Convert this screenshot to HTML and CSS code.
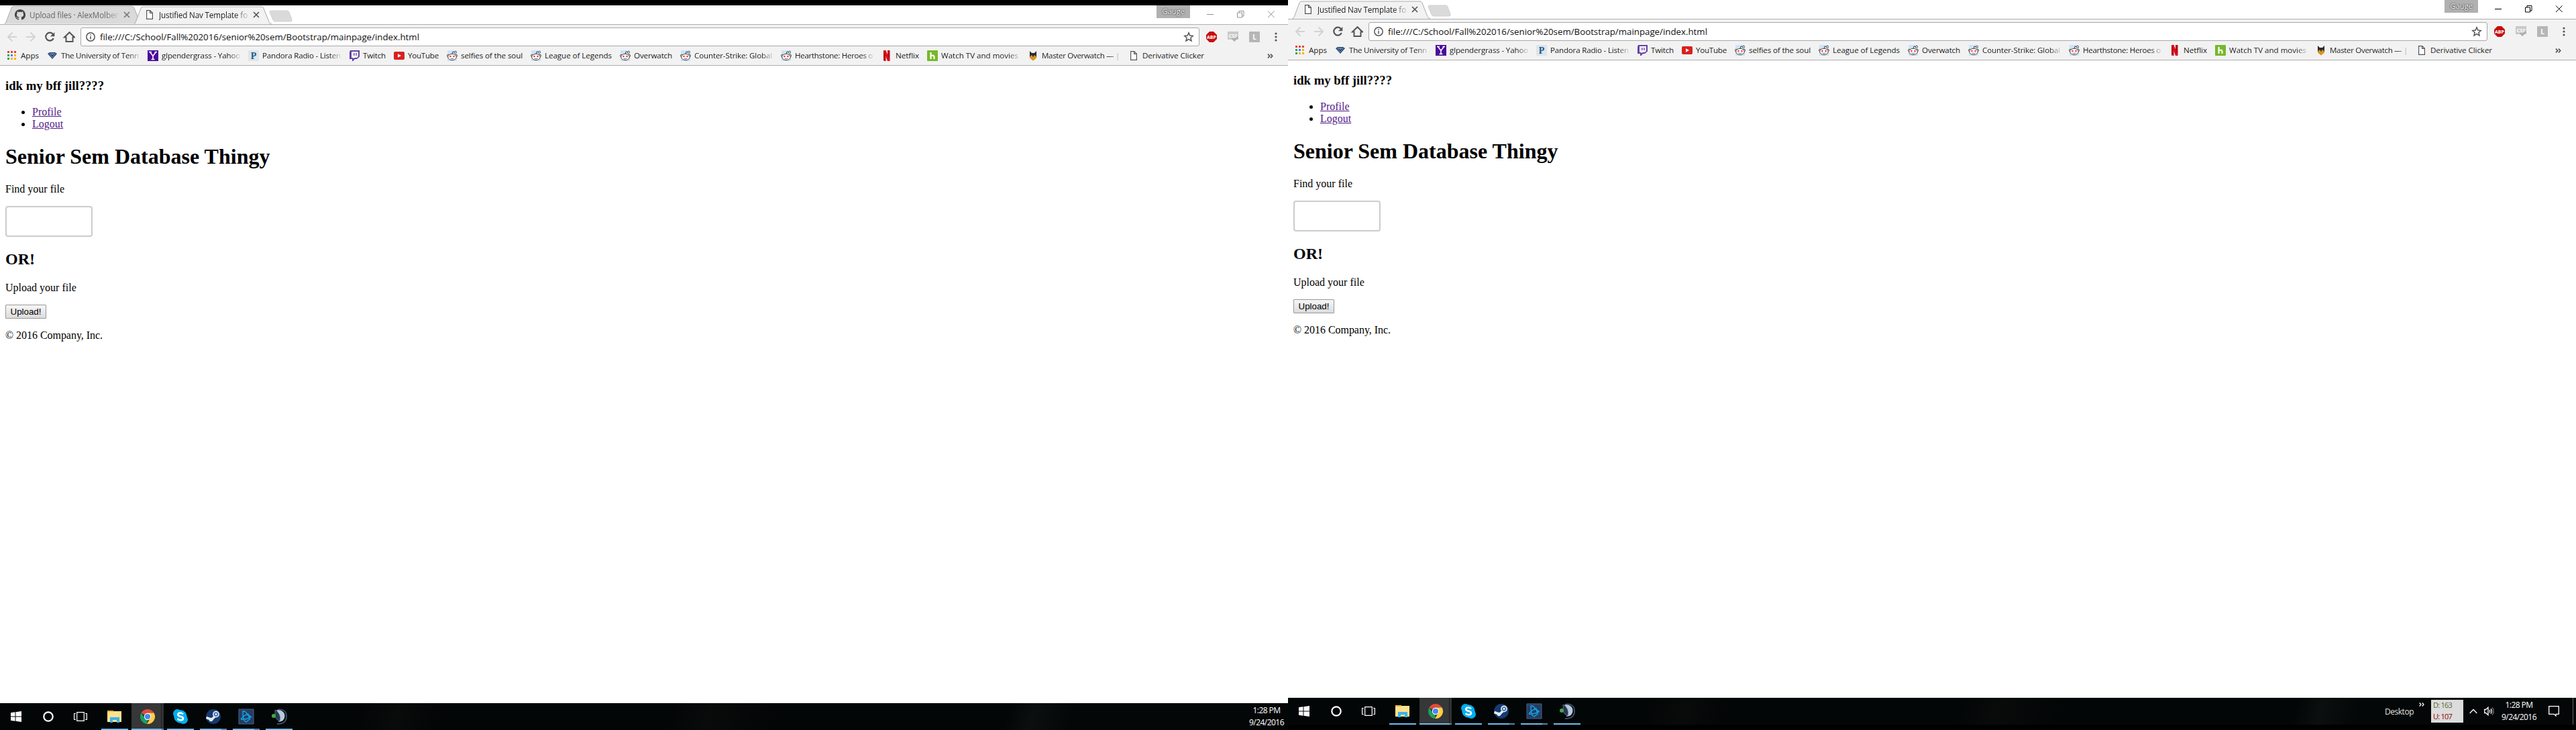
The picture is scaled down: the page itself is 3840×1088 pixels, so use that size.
FILE: index.html
```
<!DOCTYPE html>
<html lang="en">
<head>
<meta charset="utf-8">
<title>Justified Nav Template</title>
<link rel="stylesheet" href="styles.css">
</head>
<body>
<svg class="defs" aria-hidden="true">
  <symbol id="i-page" viewBox="0 0 16 16"><path d="M3.600 1.600h5.200l3.600 3.600v9.200H3.600zM8.600 1.800v3.600h3.600" fill="#fff" stroke="#555" stroke-width="1.200"/></symbol>
  <symbol id="i-close" viewBox="0 0 10 10"><path d="M1 1l8 8M9 1l-8 8" fill="none" stroke="#555" stroke-width="1.700"/></symbol>
  <symbol id="i-github" viewBox="0 0 16 16"><path fill="#444" d="M8 0C3.580 0 0 3.580 0 8c0 3.540 2.290 6.530 5.470 7.590.4.070.55-.17.55-.38 0-.19-.01-.82-.01-1.490-2.010.37-2.530-.49-2.690-.94-.09-.23-.48-.94-.82-1.130-.28-.15-.68-.52-.01-.53.63-.01 1.080.58 1.230.82.72 1.210 1.870.87 2.330.66.07-.52.28-.87.51-1.070-1.780-.2-3.640-.89-3.640-3.950 0-.87.31-1.590.82-2.150-.08-.2-.36-1.020.08-2.120 0 0 .67-.21 2.200.82.64-.18 1.320-.27 2-.27s1.360.09 2 .27c1.530-1.040 2.200-.82 2.200-.82.44 1.100.16 1.920.08 2.120.51.56.82 1.270.82 2.150 0 3.070-1.870 3.750-3.650 3.950.29.25.54.73.54 1.480 0 1.070-.01 1.930-.01 2.200 0 .21.15.46.55.38A8.010 8.010 0 0 0 16 8c0-4.420-3.580-8-8-8z"/></symbol>
  <symbol id="i-reddit" viewBox="0 0 16 16"><path d="M1 0h14v16H1z" fill="#cee3f8"/><path d="M8 6L9 2l3 .8" fill="none" stroke="#444"/><circle cx="13" cy="2.800" r="1.500" fill="#fff" stroke="#444" stroke-width=".9"/><circle cx="2.200" cy="8" r="1.700" fill="#fff" stroke="#444"/><circle cx="13.800" cy="8" r="1.700" fill="#fff" stroke="#444"/><ellipse cx="8" cy="10" rx="6.300" ry="4.700" fill="#fff" stroke="#444"/><circle cx="5.500" cy="9" r="1.200" fill="#f22"/><circle cx="10.500" cy="9" r="1.200" fill="#f22"/><path d="M5.500 12q2.500 1.500 5 0" fill="none" stroke="#444" stroke-width=".8"/></symbol>
</svg>

<main class="desktop">
  <section class="screen screen-left">
    <div class="window">
      <header class="tabstrip">
        <div class="tab tab-back">
          <svg class="tab-shape" viewBox="0 0 206 28"><path d="M.5 27.500Q2 27 3 25L11 4Q12 1.500 14 1.500H191Q193 1.500 194 4L202 24Q203.500 27.500 206 27.500"/></svg>
          <svg class="ico"><use href="#i-github"/></svg><span class="tab-title" data-fit="132">Upload files · AlexMolber</span><svg class="tab-x"><use href="#i-close"/></svg>
        </div>
        <div class="tab">
          <svg class="tab-shape" viewBox="0 0 206 28"><path d="M.5 27.500Q2 27 3 25L11 4Q12 1.500 14 1.500H191Q193 1.500 194 4L202 24Q203.500 27.500 206 27.500"/></svg>
          <svg class="ico"><use href="#i-page"/></svg><span class="tab-title" data-fit="132">Justified Nav Template fo</span><svg class="tab-x"><use href="#i-close"/></svg>
        </div>
        <svg class="newtab" viewBox="0 0 35 18"><path d="M3 1H27Q29 1 30 3L34 14Q35 17 32 17H9Q7 17 6 15L1 3Q.5 1 3 1z"/></svg>
        <div class="caption"><span class="gauge">Gauge</span>
          <svg class="win-btns" viewBox="0 0 102 12"><path d="M0 6.500h10M45.500 4h7v7h-7zM48 4V1.500h7V9h-2.500M91 1.500l9.500 9.500M100.500 1.500L91 11"/></svg>
        </div>
      </header>
      <div class="slot" data-from="browser"></div>
    </div>
    <footer class="taskbar">
      <div class="slot" data-from="apps"></div>
      <div class="clock"><span data-fit="41">1:28 PM</span><span data-fit="52">9/24/2016</span></div>
    </footer>
  </section>

  <section class="screen screen-right">
    <div class="window">
      <header class="tabstrip">
        <div class="tab">
          <svg class="tab-shape" viewBox="0 0 206 28"><path d="M.5 27.500Q2 27 3 25L11 4Q12 1.500 14 1.500H191Q193 1.500 194 4L202 24Q203.500 27.500 206 27.500"/></svg>
          <svg class="ico"><use href="#i-page"/></svg><span class="tab-title" data-fit="132">Justified Nav Template fo</span><svg class="tab-x"><use href="#i-close"/></svg>
        </div>
        <svg class="newtab" viewBox="0 0 35 18"><path d="M3 1H27Q29 1 30 3L34 14Q35 17 32 17H9Q7 17 6 15L1 3Q.5 1 3 1z"/></svg>
        <div class="caption"><span class="gauge">Gauge</span>
          <svg class="win-btns" viewBox="0 0 102 12"><path d="M0 6.500h10M45.500 4h7v7h-7zM48 4V1.500h7V9h-2.500M91 1.500l9.500 9.500M100.500 1.500L91 11"/></svg>
        </div>
      </header>
      <div class="slot" data-from="browser"></div>
    </div>
    <footer class="taskbar">
      <div class="slot" data-from="apps"></div>
      <div class="tray">
        <span class="tray-label" data-fit="43">Desktop</span>
        <svg class="tray-more" viewBox="0 0 8 6"><path d="M.7.5L3 3 .7 5.500M4.700.5L7 3 4.700 5.500"/></svg>
        <div class="net"><span class="down" data-fit="28">D: 163</span><span class="up" data-fit="28">U: 107</span></div>
        <svg class="chev" viewBox="0 0 12 8"><path d="M.7 7L6 1.500 11.300 7"/></svg>
        <svg class="speaker" viewBox="0 0 16 14"><path d="M.6 4.500h2L6 1.300v11.400L2.600 9.500h-2zM8 5q1.500 2 0 4M10 3.300q3 3.700 0 7.400"/><path d="M12 1.500q4.500 5.500 0 11" opacity=".45"/></svg>
        <div class="clock"><span data-fit="41">1:28 PM</span><span data-fit="52">9/24/2016</span></div>
        <svg class="notes" viewBox="0 0 16 16"><path d="M.7.7h14.600v11.600H11v2.700L8.300 12.300H.7z"/></svg>
      </div>
    </footer>
  </section>
</main>

<template id="browser">
  <nav class="toolbar">
    <svg class="nav-icons" viewBox="0 0 102 18">
      <path d="M15 9H2M8.500 2.500L2 9l6.500 6.500M29 9h13M35.500 2.500L42 9l-6.500 6.500" stroke="#d3d3d3" stroke-width="2"/>
      <path d="M69 5A6 6 0 1 0 69.800 11" stroke="#555" stroke-width="2.200"/><path d="M71.300 2v6.300H65z" fill="#555"/>
      <path d="M86 9.500L93.500 2.200 101 9.500h-2.500V16h-10V9.500z" stroke="#555" stroke-width="2"/>
    </svg>
    <div class="omnibox">
      <svg class="info" viewBox="0 0 14 14"><circle cx="7" cy="7" r="6.200"/><path d="M7 6v4.500M7 3.200v1.600"/></svg>
      <span class="url" data-fit="476">file:///C:/School/Fall%202016/senior%20sem/Bootstrap/mainpage/index.html</span>
      <svg class="star" viewBox="0 0 16 16"><path d="M8 1.800l1.800 4.300 4.600.4-3.500 3 1.100 4.500L8 11.600 4 14l1.100-4.500-3.500-3 4.600-.4z"/></svg>
    </div>
    <div class="exts">
      <svg viewBox="0 0 16 16"><path d="M5 0h6l5 5v6l-5 5H5l-5-5V5z" fill="#c70d0d"/><text x="8" y="11" class="abp" textLength="14" lengthAdjust="spacingAndGlyphs">ABP</text></svg>
      <svg viewBox="0 0 16 16"><path d="M0 0h16v12H0z" fill="#c9c9c9"/><text x="8" y="9" class="css" textLength="13" lengthAdjust="spacingAndGlyphs">CSS</text><path d="M6 11l2-1.500 2 2L14.500 7 16 9l-6 6z" fill="#aaa"/></svg>
      <svg viewBox="0 0 16 16"><rect width="16" height="16" rx="1" fill="#b6b6b6"/><text x="8" y="12" class="ell">L</text></svg>
      <svg viewBox="0 0 16 16"><g fill="#555"><circle cx="8" cy="3" r="1.600"/><circle cx="8" cy="8" r="1.600"/><circle cx="8" cy="13" r="1.600"/></g></svg>
    </div>
  </nav>
  <nav class="bookmarks">
    <a class="bm"><svg class="ico" viewBox="0 0 16 16"><path fill="#ea4335" d="M1 1h3v3H1zM6 1h3v3H6zM11 1h3v3h-3z"/><path fill="#34a05a" d="M1 6h3v3H1zM1 11h3v3H1z"/><path fill="#2b8cf0" d="M6 6h3v3H6z"/><path fill="#fbb110" d="M11 6h3v3h-3zM6 11h3v3H6zM11 11h3v3h-3z"/></svg><span data-fit="27">Apps</span></a>
    <a class="bm"><svg class="ico" viewBox="0 0 16 16"><path d="M1 5l3-2h8l3 2-7 8z" fill="#24426e"/><path d="M3 5h10M4.500 6l3.500 5 3.500-5M6 4l2 3 2-3" fill="none" stroke="#8fa9c9" stroke-width=".8"/></svg><span class="cut" data-fit="116">The University of Tenn</span></a>
    <a class="bm"><svg class="ico" viewBox="0 0 16 16"><path d="M0 0h16v16H0z" fill="#4a0a9c"/><path d="M3.500 2.500L8 8.500l4.500-6M8 8v5.500M2 2.500h4M10.500 2.500H14M5.500 13.500h5" fill="none" stroke="#fff" stroke-width="1.600"/></svg><span class="cut" data-fit="117">glpendergrass - Yahoo</span></a>
    <a class="bm"><svg class="ico" viewBox="0 0 16 16"><rect width="16" height="16" rx="1" fill="#dfe5ea"/><text x="8" y="13" class="pan">P</text></svg><span class="cut" data-fit="117">Pandora Radio - Listen</span></a>
    <a class="bm"><svg class="ico" viewBox="0 0 16 16"><path d="M2 0h14v9.500L12 13H9l-2.500 3H5v-3H1V3z" fill="#6441a5"/><path d="M4 2h10v7l-2 2H8.500l-2 1.500V11H4z" fill="#fff"/><path d="M7.800 4v4M11 4v4" stroke="#6441a5" stroke-width="1.400"/></svg><span data-fit="34">Twitch</span></a>
    <a class="bm"><svg class="ico" viewBox="0 0 16 16"><rect y="2" width="16" height="12" rx="2" fill="#d8211f"/><path d="M6 5.200L11 8l-5 2.800z" fill="#fff"/></svg><span data-fit="46">YouTube</span></a>
    <a class="bm"><svg class="ico"><use href="#i-reddit"/></svg><span data-fit="92">selfies of the soul</span></a>
    <a class="bm"><svg class="ico"><use href="#i-reddit"/></svg><span data-fit="100">League of Legends</span></a>
    <a class="bm"><svg class="ico"><use href="#i-reddit"/></svg><span data-fit="57">Overwatch</span></a>
    <a class="bm"><svg class="ico"><use href="#i-reddit"/></svg><span class="cut" data-fit="116">Counter-Strike: Global</span></a>
    <a class="bm"><svg class="ico"><use href="#i-reddit"/></svg><span class="cut" data-fit="116">Hearthstone: Heroes o</span></a>
    <a class="bm"><svg class="ico" viewBox="0 0 16 16"><path d="M3 0h3.500v16L3 15.500zM9 0h3.500v15.500L9 16z" fill="#b20710"/><path d="M3 0h3.500l6 15.500L9 16z" fill="#e50914"/></svg><span data-fit="35">Netflix</span></a>
    <a class="bm"><svg class="ico" viewBox="0 0 16 16"><rect width="16" height="16" rx="1" fill="#76b82a"/><path d="M5.500 3v10M5.500 8.500q5-2 5 1V13" fill="none" stroke="#fff" stroke-width="2.200"/></svg><span class="cut" data-fit="115">Watch TV and movies</span></a>
    <a class="bm"><svg class="ico" viewBox="0 0 16 16"><path d="M3 1l3 3h4l3-3v9l-5 5-5-5z" fill="#2b2b30"/><path d="M3.500 9L6 7l2 3 2-3 2.500 2v3L8 15.500 3.500 12z" fill="#d9961c"/></svg><span class="cut" data-fit="116">Master Overwatch — |</span></a>
    <a class="bm"><svg class="ico"><use href="#i-page"/></svg><span data-fit="92">Derivative Clicker</span></a>
    <svg class="overflow" viewBox="0 0 9 7"><path d="M1 .7L3.700 3.500 1 6.300M5 .7l2.700 2.800L5 6.300"/></svg>
  </nav>
  <article class="page">
    <h3>idk my bff jill????</h3>
    <ul><li><a href="#">Profile</a></li><li><a href="#">Logout</a></li></ul>
    <h1>Senior Sem Database Thingy</h1>
    <p>Find your file</p>
    <input class="search" type="text" aria-label="Find your file">
    <h2>OR!</h2>
    <p>Upload your file</p>
    <button class="upload" type="button">Upload!</button>
    <p data-fit="145" class="legal">© 2016 Company, Inc.</p>
  </article>
</template>

<template id="apps">
  <div class="system">
    <svg viewBox="0 0 16 16"><path d="M0 2.300l6.500-1v6.200H0zM7.500 1.200L16 0v7.500H7.500zM0 8.500h6.500v6.200L0 13.700zM7.500 8.500H16V16l-8.500-1.200z" fill="#fff"/></svg>
    <svg viewBox="0 0 16 16"><circle cx="8" cy="8" r="6.700" fill="none" stroke="#fff" stroke-width="2.200"/></svg>
    <svg class="wide" viewBox="0 0 20 14"><path d="M4.700.7h10.600v12.600H4.700zM3 2.500H.6v9H3M17 2.500h2.400v9H17" fill="none" stroke="#fff" stroke-width="1.200"/></svg>
  </div>
  <div class="app"><svg viewBox="0 0 24 24"><path d="M1 3h8l1 1h12v16H1z" fill="#ffe290"/><path d="M1 3h9v2H1z" fill="#eeb52f"/><path d="M5 13h14v8h-4v-4H9v4H5z" fill="#3bb4ea"/></svg></div>
  <div class="app app-active app-multi"><svg viewBox="0 0 24 24"><path d="M12 12L2.500 6.500A11 11 0 0 1 21.500 6.500H12z" fill="#dd4b3e"/><path d="M12 12L11 23A11 11 0 0 1 2.500 6.500L8 15z" fill="#1da05d"/><path d="M12 6.500h9.500A11 11 0 0 1 11 23l5.500-9z" fill="#ffce43"/><circle cx="12" cy="12" r="5.200" fill="#fff"/><circle cx="12" cy="12" r="4.100" fill="#4688f1"/></svg></div>
  <div class="app"><svg viewBox="0 0 24 24"><circle cx="7.500" cy="7.500" r="6.500" fill="#00aff0"/><circle cx="16.500" cy="16.500" r="6.500" fill="#00aff0"/><circle cx="12" cy="12" r="9.700" fill="#00aff0"/><path d="M16 8.500Q14.500 6.500 12 6.500 8.300 6.500 8.300 9q0 2 3.700 2.700 4 .8 4 3 0 2.600-4 2.600-2.800 0-4.300-2.300" fill="none" stroke="#fff" stroke-width="2.600"/></svg></div>
  <div class="app app-multi"><svg viewBox="0 0 24 24"><circle cx="12" cy="12" r="11" fill="#143a70"/><path d="M1.500 13.500l8 3 5-5" fill="none" stroke="#e6ebf2" stroke-width="3.500"/><circle cx="16" cy="8.500" r="4" fill="#24528e" stroke="#dfe5ee" stroke-width="1.800"/><circle cx="16" cy="8.500" r="1.800" fill="#dfe5ee"/><circle cx="8.500" cy="16.500" r="2.800" fill="#e6ebf2"/></svg></div>
  <div class="app app-multi"><svg viewBox="0 0 24 24"><path d="M1 1h22v22H1z" fill="#263c62" stroke="#49608a"/><path d="M7 3.500l4 1.500q5 5 6 10M7 3.500Q6.500 11 9 18M4 16q8 1 15-3.500L16 10M4 16l3-3.500q5-4 9-4.500M9 18l3 2q5-4 6-5M12 8l8 5" fill="none" stroke="#12a0e2" stroke-width="1.500"/></svg></div>
  <div class="app"><svg viewBox="0 0 24 24"><path d="M10 1.500q13-1 13 10.500 0 11-14 11" fill="none" stroke="#3c526f" stroke-width="1.800"/><path d="M8 2q12.500 0 12.500 9.500Q20 19.500 11 20q5-7-3-18z" fill="#b8c9de"/><path d="M6 2q10 6 7 17-5-2-7-7z" fill="#27384f" stroke="#7088a6" stroke-width=".7"/><circle cx="4" cy="11" r="3" fill="#42a844"/></svg></div>
</template>
<script src="main.js"></script>
</body>
</html>
```
FILE: styles.css
```
body { margin: 0; background: #000; overflow: hidden; font-family: "Open Sans", "Noto Sans", sans-serif; }
.defs { position: absolute; width: 0; height: 0; }
.desktop { display: flex; width: 3840px; height: 1088px; }
.screen { box-sizing: border-box; display: flex; flex-direction: column; width: 1920px; height: 1088px; background: #000; }
.screen-left { padding-top: 8px; }
.screen-right { padding-bottom: 8px; }
.window { flex: 1; background: #fff; }
.slot { display: contents; }
.ico { width: 16px; height: 16px; flex: none; }

.tabstrip { display: flex; height: 28px; padding-left: 6px; border-bottom: 1px solid #b0b0b0; background: #fff; }
.tab { position: relative; display: flex; align-items: center; flex: none; width: 177px; height: 28px; padding-left: 16px; font-size: 11.700px; color: #222; }
.tab > * { position: relative; }
.tab .tab-shape { position: absolute; left: 0; top: 0; width: 206px; height: 29px; fill: #f2f2f2; stroke: #aaa; overflow: visible; }
.tab-back .tab-shape { fill: #dadada; height: 28px; }
.tab-back { color: #666; }
.tab-title { width: 134px; margin-left: 6px; white-space: pre; mask-image: linear-gradient(90deg, #000 84%, rgba(0, 0, 0, .1)); }
.tab-x { width: 10px; height: 10px; margin-left: 6px; flex: none; }
.tab-back .tab-x { opacity: .75; }
.newtab { width: 35px; height: 18px; margin: 7px 0 0 9px; fill: #dadada; stroke: #d0d0d0; flex: none; }
.caption { display: flex; margin-left: auto; padding-right: 19px; }
.gauge { width: 50px; height: 19px; background: #b0b0b0; color: #fff; font-size: 11.500px; line-height: 18px; text-align: center; letter-spacing: -.2px; text-shadow: 0 0 2px #222, 0 0 1px #333; }
.win-btns { width: 102px; height: 12px; margin: 7px 0 0 25px; fill: none; stroke: #000; }
.screen-left .win-btns { stroke: #929292; }

.toolbar { display: flex; align-items: center; height: 28px; padding: 4px 10px 0; background: #f2f2f2; }
.nav-icons { width: 102px; height: 18px; fill: none; }
.omnibox { box-sizing: border-box; display: flex; align-items: center; width: 1668px; height: 28px; margin-left: 8px; padding: 0 7px; border: 1px solid #a9a9a9; border-radius: 3px; background: #fff; }
.info { width: 14px; height: 14px; fill: none; stroke: #555; stroke-width: 1.500; }
.url { margin-left: 7px; font-size: 13.300px; line-height: 20px; color: #111; white-space: pre; }
.star { width: 16px; height: 16px; margin-left: auto; fill: none; stroke: #555; stroke-width: 1.500; }
.exts { display: flex; gap: 16px; margin-left: 10px; }
.exts svg { width: 16px; height: 16px; }
.exts text, .pan { font-weight: 700; text-anchor: middle; fill: #fff; }
.abp, .css { font-size: 7.500px; }
.ell { font-size: 10px; }
.bm .pan { font-family: "Liberation Serif", serif; font-size: 14px; fill: #14598c; }

.bookmarks { display: flex; align-items: center; gap: 12px; height: 28px; padding: 0 22px 0 10px; background: #f2f2f2; border-bottom: 1px solid #b0b0b0; }
.bm { display: flex; align-items: center; gap: 5px; font-size: 11.600px; line-height: 18px; color: #222; }
.bm span { white-space: pre; }
.bm .cut { mask-image: linear-gradient(90deg, #000 86%, rgba(0, 0, 0, .1)); }
.overflow { width: 9px; height: 7px; margin-left: auto; fill: none; stroke: #555; stroke-width: 1.700; }

.page { padding: 1px 8px; font: 16px/18px "Liberation Serif", "Times New Roman", serif; color: #000; }
.page h3 { margin: 18px 0 19px; font-size: 18.720px; line-height: 22px; }
.page ul { margin: 0 0 21px; padding-left: 40px; }
.page a { color: #551a8b; text-decoration: underline; }
.page h1 { margin: 0 0 21px; font-size: 32px; line-height: 37px; }
.page h2 { margin: 20px 0; font-size: 24px; line-height: 27px; }
.page p { margin: 16px 0; }
.search { box-sizing: border-box; display: block; width: 130px; height: 46px; border: 2px solid #ccc; border-radius: 4px; background: #fff; }
.upload { box-sizing: border-box; display: block; width: 61px; height: 21px; padding: 0; border: 1px solid #999; border-radius: 1px; background: linear-gradient(#f6f6f6, #dcdcdc); font: 13.333px "Liberation Sans", Arial, sans-serif; color: #000; }

.taskbar { display: flex; height: 40px; background: linear-gradient(105deg, #030606 0 28%, #080b0a 31%, #030606 34% 52%, #080b0a 55%, #030606 60% 78%, #0c0f0f 80%, #040707 83%); }
.system { display: flex; align-items: center; gap: 32px; width: 135px; padding-left: 16px; }
.system svg { width: 16px; height: 16px; }
.system .wide { width: 20px; height: 14px; margin-left: -2px; }
.app { box-sizing: border-box; width: 40px; height: 40px; margin-right: 9px; padding: 8px 8px 6px; border-bottom: 2px solid #76b9ed; }
.app svg { display: block; width: 24px; height: 24px; }
.app-multi { border-image: linear-gradient(90deg, #76b9ed 78%, #5383ab 78%) 1; border-image-width: 0 0 2px; }
.app-active { width: 48px; margin: 0 5px 0 -4px; padding-left: 12px; background: linear-gradient(90deg, #363738 0 44px, #1e2020 44px 45px, #323334 45px); border-image: linear-gradient(90deg, #76b9ed 44px, #5383ab 44px) 1; border-image-width: 0 0 2px; }
.clock { display: flex; flex-direction: column; align-items: center; justify-content: center; width: 60px; margin-left: auto; padding-right: 2px; font-size: 12px; line-height: 18px; color: #fff; white-space: pre; }
.tray { display: flex; align-items: center; margin-left: auto; padding-right: 4px; border-right: 1px solid #666; margin-right: 4px; }
.tray svg { fill: none; stroke: #fff; stroke-width: 1.300; flex: none; }
.tray-label { font-size: 12px; color: #e0e0e0; white-space: pre; }
.tray .tray-more { align-self: flex-start; width: 8px; height: 6px; margin: 7px 10px 0 8px; }
.net { box-sizing: border-box; display: flex; flex-direction: column; width: 48px; height: 34px; padding-left: 3px; background: #dcdcdc; font-size: 11px; line-height: 16.500px; white-space: pre; }
.down { color: #556b2f; }
.up { color: #8b0000; }
.chev { width: 12px; height: 8px; margin: 0 10px 0 9px; }
.speaker { width: 16px; height: 14px; }
.tray .clock { margin: 0 14px 0 6px; padding: 0; }
.notes { width: 16px; height: 16px; margin-right: 16px; }
```
FILE: main.js
```
// Both monitors show the same browser body and the same pinned apps.
document.querySelectorAll('.slot').forEach(function (slot) {
  slot.append(document.getElementById(slot.dataset.from).content.cloneNode(true));
});

document.querySelectorAll('[data-fit]').forEach(function (el) {
  var range = document.createRange();
  range.selectNodeContents(el);
  var target = Number(el.dataset.fit);
  var natural = range.getBoundingClientRect().width;
  el.style.letterSpacing = (target - natural) / el.textContent.length + 'px';
  if (el.closest('.bm')) {
    el.style.width = (el.classList.contains('cut') ? 117 : target) + 'px';
    el.style.flex = 'none';
  }
});
```
